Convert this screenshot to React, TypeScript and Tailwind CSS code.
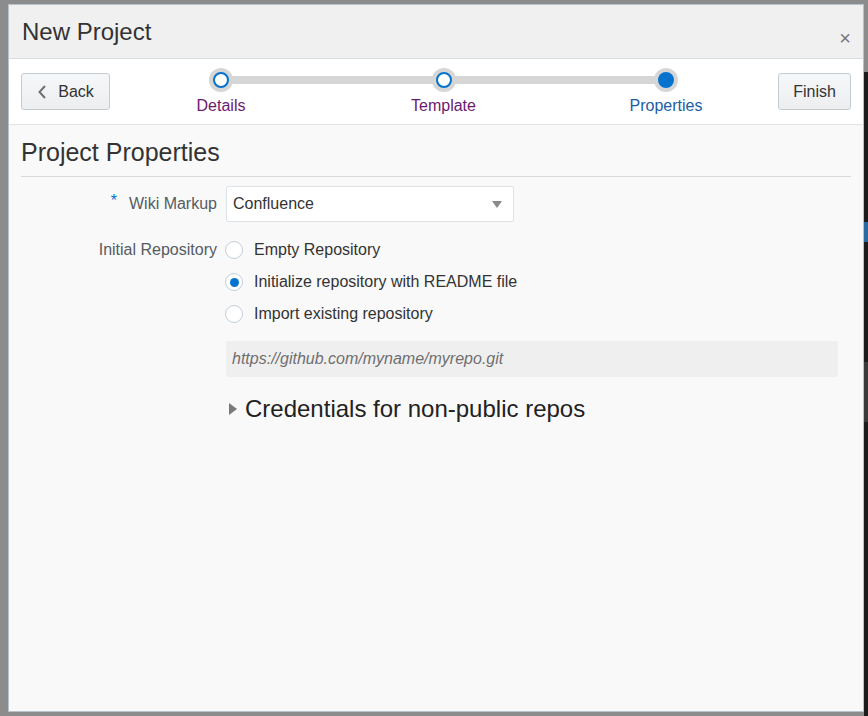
import React from "react";

function Step({ label, state }: { label: string; state: "visited" | "current" }) {
  return (
    <div className="relative z-10 flex w-[100px] flex-col items-center">
      <div className="flex h-[24px] w-[24px] items-center justify-center rounded-full bg-[#d6d6d6]">
        {state === "current" ? (
          <div className="h-[16px] w-[16px] rounded-full bg-[#0572ce]" />
        ) : (
          <div className="h-[16px] w-[16px] rounded-full border-2 border-[#0572ce] bg-white" />
        )}
      </div>
      <div
        className={
          state === "current"
            ? "mt-[4px] text-[16px] leading-[20px] text-[#1b5ea6]"
            : "mt-[4px] text-[16px] leading-[20px] text-[#6b1a70]"
        }
      >
        {label}
      </div>
    </div>
  );
}

function Radio({ checked, label }: { checked?: boolean; label: string }) {
  return (
    <div className="flex h-[32px] items-center">
      <div className="flex h-[18px] w-[18px] items-center justify-center rounded-full border border-[#c4ced7] bg-white">
        {checked && <div className="h-[9px] w-[9px] rounded-full bg-[#0572ce]" />}
      </div>
      <span className="ml-[11px] text-[16px] text-[#333333]">{label}</span>
    </div>
  );
}

export default function App() {
  return (
    <div className="flex h-[716px] w-[868px] bg-[#8c8c8c] pt-[4px] pb-[4px] pl-[8px] font-['Liberation_Sans',Arial,sans-serif]">
      <div className="flex h-[708px] w-[856px] flex-col border border-[#b8c2ca] bg-[#f9f9f9]">
        {/* Header */}
        <div className="flex h-[54px] shrink-0 items-center justify-between border-b border-[#d6dfe6] bg-[#f0f0f0] pl-[13px] pr-[12px]">
          <div className="text-[24px] leading-[28px] text-[#333333]">New Project</div>
          <div className="mt-[12px] text-[20px] leading-[20px] text-[#777777]">×</div>
        </div>
        {/* Train */}
        <div className="flex h-[66px] shrink-0 items-center border-b border-[#e3e3e3] bg-white px-[12px]">
          <button className="flex h-[37px] w-[89px] items-center justify-center rounded-[3px] border border-[#c4ccd3] bg-gradient-to-b from-[#f6f7f8] to-[#eceef0] text-[16px] text-[#333333]">
            <svg width="10" height="16" viewBox="0 0 10 16" className="mr-[11px]">
              <path d="M8 2 L2.5 8 L8 14" fill="none" stroke="#707070" strokeWidth="2" />
            </svg>
            Back
          </button>
          <div className="relative ml-[61px] flex w-[545px] justify-between self-start pt-[9px]">
            <div className="absolute left-[50px] right-[50px] top-[17px] h-[8px] bg-[#d6d6d6]" />
            <Step label="Details" state="visited" />
            <Step label="Template" state="visited" />
            <Step label="Properties" state="current" />
          </div>
          <div className="flex-1" />
          <button className="h-[37px] w-[73px] rounded-[3px] border border-[#c4ccd3] bg-gradient-to-b from-[#f6f7f8] to-[#eceef0] text-[16px] text-[#333333]">
            Finish
          </button>
        </div>
        {/* Content */}
        <div className="flex flex-col px-[12px]">
          <div className="border-b border-[#d9d9d9] pt-[12px] pb-[9px] text-[25px] leading-[30px] text-[#333333]">
            Project Properties
          </div>
          <div className="mt-[9px] flex items-center">
            <div className="flex w-[196px] items-center justify-end">
              <span className="mr-[12px] -mt-[6px] text-[16px] text-[#0572ce]">*</span>
              <span className="text-[16px] text-[#555c63]">Wiki Markup</span>
            </div>
            <div className="ml-[9px] flex h-[36px] w-[288px] items-center justify-between rounded-[2px] border border-[#dfe4e8] bg-white pl-[6px] pr-[11px]">
              <span className="text-[16px] text-[#333333]">Confluence</span>
              <svg width="10" height="7" viewBox="0 0 10 7">
                <path d="M0 0 L10 0 L5 7 Z" fill="#8a8a8a" />
              </svg>
            </div>
          </div>
          <div className="mt-[12px] flex">
            <div className="flex h-[32px] w-[196px] items-center justify-end">
              <span className="text-[16px] text-[#555c63]">Initial Repository</span>
            </div>
            <div className="ml-[8px] flex flex-1 flex-col pr-[13px]">
              <Radio label="Empty Repository" />
              <Radio checked label="Initialize repository with README file" />
              <Radio label="Import existing repository" />
              <div className="mt-[11px] ml-[1px] flex h-[36px] items-center rounded-[2px] bg-[#efeff0] pl-[6px]">
                <span className="text-[16px] italic text-[#6f6f6f]">https://github.com/myname/myrepo.git</span>
              </div>
              <div className="mt-[19px] ml-[4px] flex items-center">
                <svg width="8" height="12" viewBox="0 0 8 12">
                  <path d="M0 0 L8 6 L0 12 Z" fill="#7a7a7a" />
                </svg>
                <span className="ml-[8px] text-[24px] leading-[26px] text-[#222222]">Credentials for non-public repos</span>
              </div>
            </div>
          </div>
        </div>
      </div>
      <div className="flex h-[716px] w-[4px] -mt-[4px] flex-col bg-[#1c1c1c]">
        <div className="h-[72px] bg-[#8c8c8c]" />
        <div className="mt-[150px] h-[20px] bg-[#2a6aa0]" />
        <div className="mt-[120px] h-[60px] bg-[#3a3a3a]" />
      </div>
    </div>
  );
}
